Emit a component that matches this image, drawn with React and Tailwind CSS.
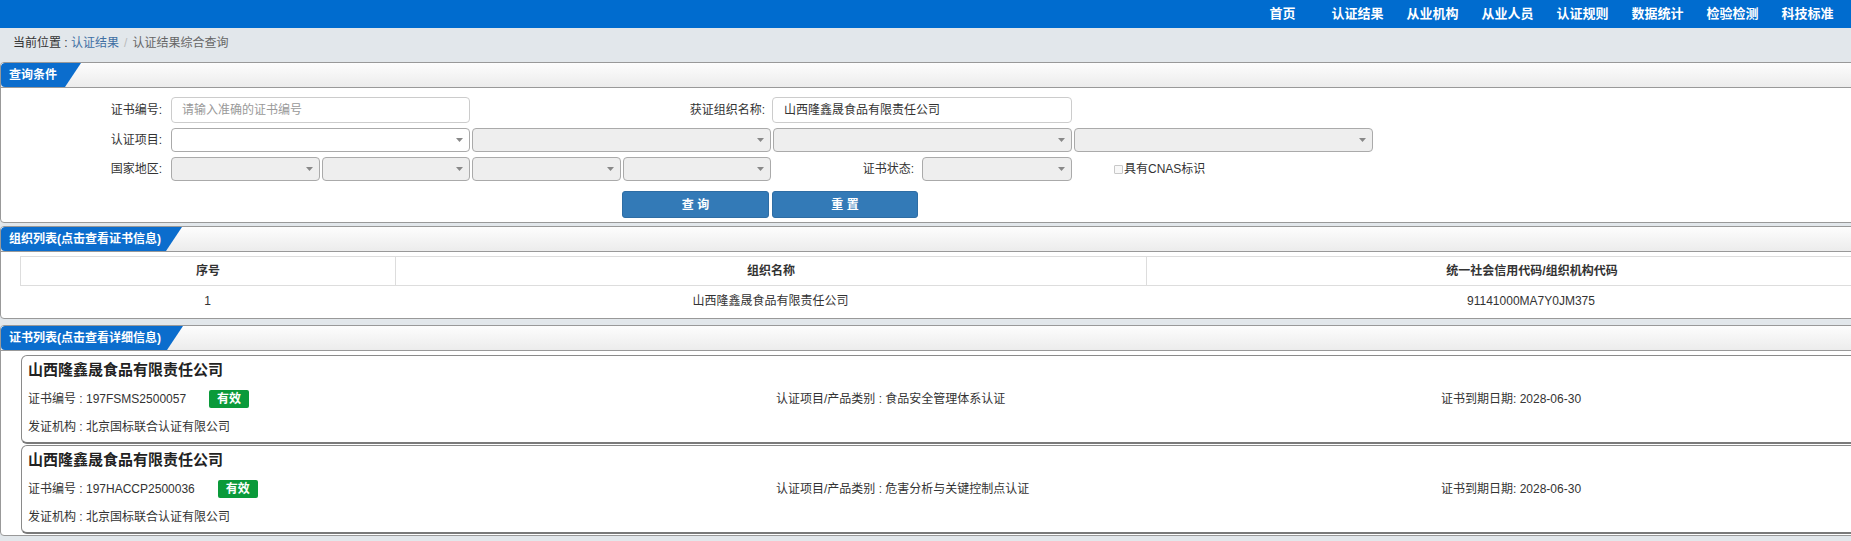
import React from "react";

const F = "font-['Liberation_Sans','Noto_Sans_CJK_SC',sans-serif]";

function Arrow() {
  return (
    <svg width="7" height="4" viewBox="0 0 7 4" className="block">
      <path d="M0 0h7L3.5 4z" fill="#888" />
    </svg>
  );
}

function Select({ className }) {
  return (
    <div className={"h-full flex items-center justify-end pr-[6px] border border-[#aaa] rounded-[4px] " + className}>
      <Arrow />
    </div>
  );
}

function Panel({ title, tabClass, className, children }) {
  return (
    <div className={"bg-white border border-[#999] rounded-[4px] overflow-hidden " + className}>
      <div className="h-[25px] border-b border-[#999] bg-gradient-to-b from-[#fdfdfd] to-[#ececec] flex">
        <div
          className={
            "h-[24px] bg-[#0b6dcd] rounded-l-[4px] text-white font-bold text-[12px] leading-[24px] pl-[8px] [clip-path:polygon(0_0,100%_0,calc(100%-16px)_100%,0_100%)] " +
            tabClass
          }
        >
          {title}
        </div>
      </div>
      {children}
    </div>
  );
}

const navItems = ["首页", "认证结果", "从业机构", "从业人员", "认证规则", "数据统计", "检验检测", "科技标准"];

function Card({ no, item }) {
  return (
    <div className="w-[1900px] border border-[#8a8a8a] border-b-2 border-b-[#7a7a7a] rounded-[6px] pl-[6px] pt-[2px] text-[#333]">
      <div className="h-[24px] leading-[24px] text-[15px] font-bold text-[#222]">山西隆鑫晟食品有限责任公司</div>
      <div className="mt-[2px] h-[30px] flex items-center text-[12px]">
        <div className="w-[748px] flex items-center">
          <span>证书编号 : {no}</span>
          <span className="ml-[23px] h-[18px] w-[40px] bg-[#0a9a3a] rounded-[2px] text-white font-bold text-[12px] leading-[18px] text-center">
            有效
          </span>
        </div>
        <div className="w-[665px]">认证项目/产品类别 : {item}</div>
        <div>证书到期日期: 2028-06-30</div>
      </div>
      <div className="h-[28px] leading-[26px] text-[12px]">发证机构 : 北京国标联合认证有限公司</div>
    </div>
  );
}

export default function App() {
  return (
    <div className={"w-[1851px] h-[541px] overflow-hidden bg-[#e2e7eb] text-[#333] " + F}>
      {/* nav */}
      <div className="h-[28px] bg-[#006ccf] flex justify-end pr-[6px]">
        {navItems.map((n) => (
          <div key={n} className="w-[75px] text-center text-white font-bold text-[13px] leading-[27px]">
            {n}
          </div>
        ))}
      </div>
      {/* breadcrumb */}
      <div className="h-[34px] pt-[5px] pl-[13px] text-[12px] leading-[20px]">
        <span className="text-[#333]">当前位置 : </span>
        <span className="text-[#3f6fa3]">认证结果</span>
        <span className="text-[#bbb] mx-[5px]">/</span>
        <span className="text-[#666]">认证结果综合查询</span>
      </div>

      <div className="w-[1940px]">
        {/* query panel */}
        <Panel title="查询条件" tabClass="w-[80px]">
          <div className="pt-[9px] pb-[4px] text-[12px]">
            {/* row 1 */}
            <div className="h-[26px] flex items-center">
              <div className="w-[170px] text-right pr-[9px]">证书编号:</div>
              <div className="w-[299px] h-full border border-[#ccc] rounded-[4px] pl-[10px] flex items-center text-[#999]">
                请输入准确的证书编号
              </div>
              <div className="w-[302px] text-right pr-[7px]">获证组织名称:</div>
              <div className="w-[300px] h-full border border-[#ccc] rounded-[4px] pl-[11px] flex items-center text-[#333]">
                山西隆鑫晟食品有限责任公司
              </div>
            </div>
            {/* row 2 */}
            <div className="mt-[5px] h-[24px] flex items-center">
              <div className="w-[170px] text-right pr-[9px]">认证项目:</div>
              <div className="flex h-full gap-[2px]">
                <Select className="w-[299px] bg-white" />
                <Select className="w-[299px] bg-[#eee]" />
                <Select className="w-[299px] bg-[#eee]" />
                <Select className="w-[299px] bg-[#eee]" />
              </div>
            </div>
            {/* row 3 */}
            <div className="mt-[5px] h-[24px] flex items-center">
              <div className="w-[170px] text-right pr-[9px]">国家地区:</div>
              <div className="flex h-full gap-[2px]">
                <Select className="w-[148.5px] bg-[#eee]" />
                <Select className="w-[148.5px] bg-[#eee]" />
                <Select className="w-[148.5px] bg-[#eee]" />
                <Select className="w-[148.5px] bg-[#eee]" />
              </div>
              <div className="w-[151px] text-right pr-[8px]">证书状态:</div>
              <Select className="w-[150px] bg-[#eee]" />
              <div className="ml-[42px] flex items-center">
                <span className="w-[9px] h-[9px] border border-[#c8c8c8] bg-[#f8f8f8] rounded-[1px]"></span>
                <span className="ml-[1px]">具有CNAS标识</span>
              </div>
            </div>
            {/* row 4 */}
            <div className="mt-[10px] h-[27px] flex">
              <div className="w-[621px]"></div>
              <button className="w-[147px] h-full bg-[#337ab7] border border-[#2e6da4] rounded-[3px] text-white font-bold text-[12px]">
                查 询
              </button>
              <button className="ml-[3px] w-[146px] h-full bg-[#337ab7] border border-[#2e6da4] rounded-[3px] text-white font-bold text-[12px]">
                重 置
              </button>
            </div>
          </div>
        </Panel>

        {/* org list */}
        <Panel title="组织列表(点击查看证书信息)" tabClass="w-[181px]" className="mt-[3px]">
          <div className="pl-[19px] pt-[4px] pb-[3px] text-[12px]">
            <div className="flex h-[30px] border border-[#ddd] font-bold text-[#333]">
              <div className="w-[375px] border-r border-[#ddd] flex items-center justify-center">序号</div>
              <div className="w-[751px] border-r border-[#ddd] flex items-center justify-center">组织名称</div>
              <div className="w-[770px] flex items-center justify-center">统一社会信用代码/组织机构代码</div>
            </div>
            <div className="flex h-[29px] text-[#333]">
              <div className="w-[375px] flex items-center justify-center">1</div>
              <div className="w-[751px] flex items-center justify-center">山西隆鑫晟食品有限责任公司</div>
              <div className="w-[770px] flex items-center justify-center">91141000MA7Y0JM375</div>
            </div>
          </div>
        </Panel>

        {/* cert list */}
        <Panel title="证书列表(点击查看详细信息)" tabClass="w-[182px]" className="mt-[6px]">
          <div className="pl-[20px] pt-[4px] pb-[1px]">
            <Card no="197FSMS2500057" item="食品安全管理体系认证" />
            <div className="mt-[1px]">
              <Card no="197HACCP2500036" item="危害分析与关键控制点认证" />
            </div>
          </div>
        </Panel>
      </div>
    </div>
  );
}
